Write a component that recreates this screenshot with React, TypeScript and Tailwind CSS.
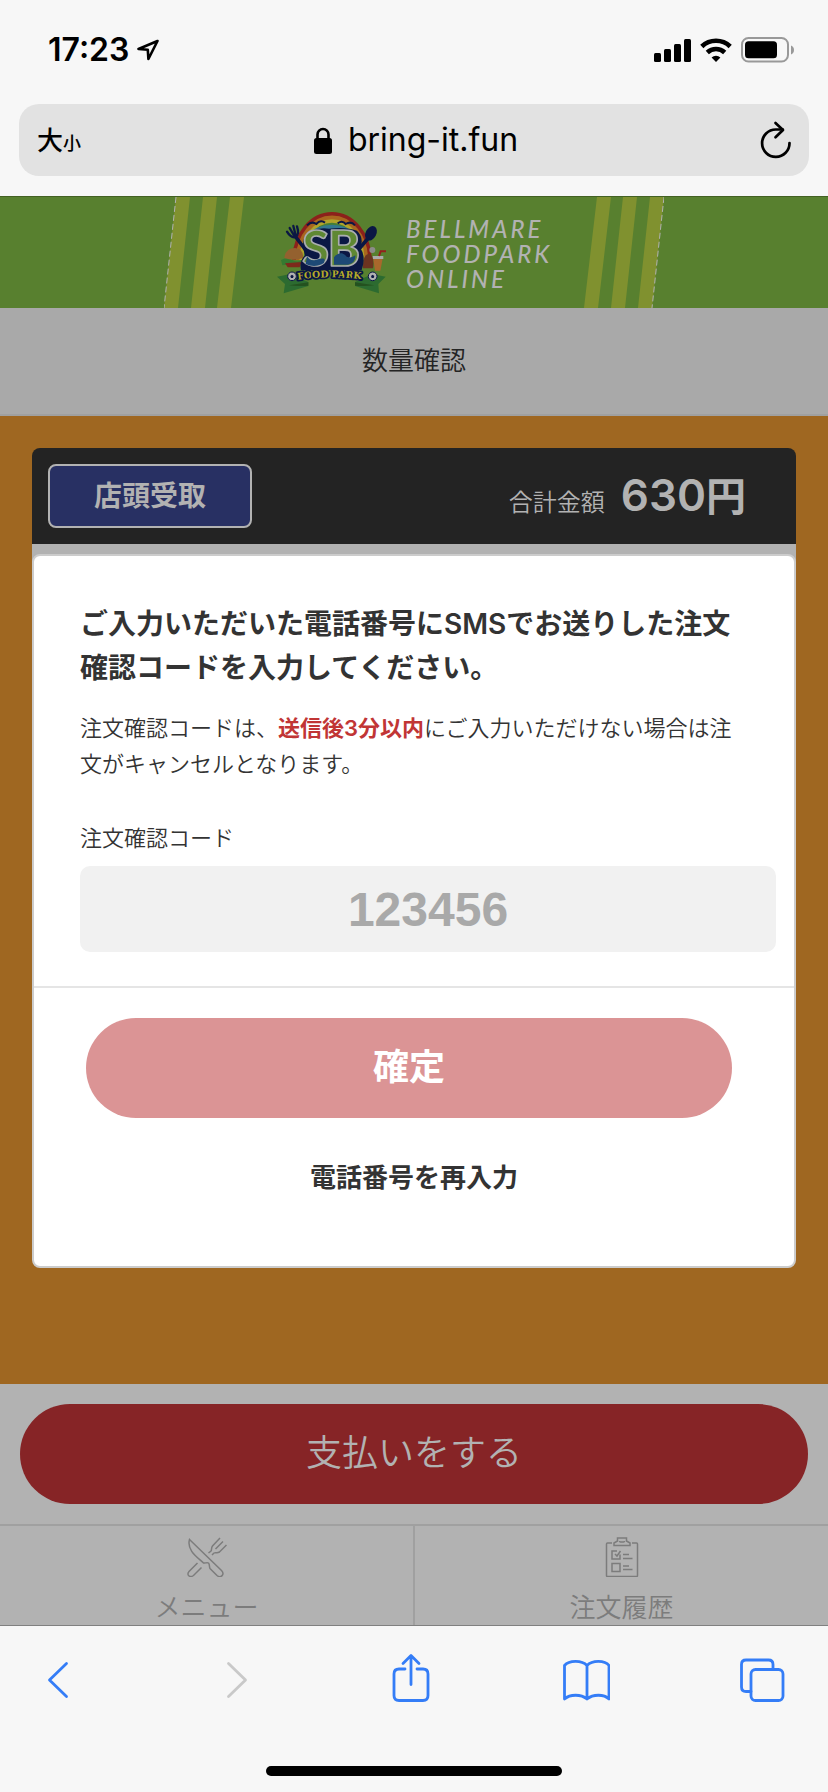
import { useState } from "react"
import type { ReactNode } from "react"

function App() {
  return (
    <div className="flex min-h-screen flex-col bg-[#f7f7f7] font-['Inter','Noto_Sans_CJK_JP',sans-serif] text-[#333]">
      <StatusBar />
      <AddressBar />
      <Banner />
      <h1 className="border-b-2 border-[#a0a0a0] bg-[#a9a9a9] py-8 text-center text-[26px] leading-[42px] font-[350] text-[#242424]">
        数量確認
      </h1>
      <main className="flex-1 bg-[#9f6721] px-8 pt-8 pb-[116px]">
        <OrderHeader />
        <CodeDialog />
      </main>
      <div className="bg-[#b2b2b2] p-5">
        <button className="h-[100px] w-full rounded-full bg-[#862426] pb-0.5 text-4xl font-[350] text-[#b2b2b2]">
          支払いをする
        </button>
      </div>
      <TabBar />
      <BrowserToolbar />
    </div>
  )
}

function StatusBar() {
  return (
    <div className="flex items-center justify-between px-[34px] pt-[33px] pb-[37px] text-black">
      <div className="flex items-center gap-2 pl-3.5">
        <span className="text-[32px] leading-[34px] font-semibold">17:23</span>
        <svg width="24" height="24" viewBox="0 0 24 24" fill="none">
          <path
            d="M20.500 3 1.500 11l9.300.8.6 9.200z"
            stroke="#000"
            strokeWidth="2.6"
            strokeLinejoin="round"
          />
        </svg>
      </div>
      <div className="flex items-center gap-[9px]">
        <svg width="37" height="24" viewBox="0 0 37 24">
          <rect y="15" width="7" height="9" rx="1.5" />
          <rect x="10" y="11" width="7" height="13" rx="1.5" />
          <rect x="20" y="6" width="7" height="18" rx="1.5" />
          <rect x="30" y="1" width="7" height="23" rx="1.5" />
        </svg>
        <svg width="32" height="24" viewBox="0 0 32 24" fill="none">
          <path d="M1.8 8.5a20.5 20.5 0 0 1 28.4 0" stroke="#000" strokeWidth="4.6" />
          <path d="M7.3 14.5a12.6 12.6 0 0 1 17.4 0" stroke="#000" strokeWidth="4.6" />
          <path d="M16 24l-4.4-4.6a6.4 6.4 0 0 1 8.8 0z" fill="#000" />
        </svg>
        <svg width="53" height="26" viewBox="0 0 53 26">
          <rect x="1" y="1" width="46" height="23.5" rx="6.5" fill="none" stroke="#999" strokeWidth="2" />
          <rect x="4" y="4.3" width="32" height="17" rx="3.5" />
          <path d="M50 8.5c4 1.5 4 7.5 0 9z" fill="#999" />
        </svg>
      </div>
    </div>
  )
}

function AddressBar() {
  return (
    <div className="px-[19px] pb-5">
      <div className="flex h-[72px] items-center justify-between rounded-[20px] bg-[#e2e2e2] px-[18px] text-black">
        <button className="w-16 text-left text-[26px] font-medium" aria-label="大小">
          大<span className="text-lg">小</span>
        </button>
        <div className="flex items-center gap-4 text-[32px]">
          <svg width="18" height="27" viewBox="0 0 18 27">
            <rect y="11" width="18" height="16" rx="2.5" />
            <path d="M3.5 12V7.500a5.500 5.500 0 0 1 11 0V12" fill="none" stroke="#000" strokeWidth="2.6" />
          </svg>
          <span>bring-it.fun</span>
        </div>
        <button className="flex w-[60px] justify-end" aria-label="再読み込み">
          <svg width="32" height="38" viewBox="0 0 32 38" fill="none" stroke="#000" strokeWidth="2.7">
            <path d="M30.500 22A13.700 13.700 0 1 1 16.800 8.500h7" strokeLinecap="round" />
            <path d="M16.500 2l7.500 7-7.500 7.300" strokeLinecap="round" strokeLinejoin="round" />
          </svg>
        </button>
      </div>
    </div>
  )
}

function Banner() {
  return (
    <header className="flex h-28 justify-center border-t border-[#436122] bg-[#58802f]">
      <svg width="80" height="111" viewBox="0 0 80 111" fill="#80912f">
        <path d="M12 0h14L14 111H0zM39 0h14L41 111H27zM66 0h14L67 111H53z" />
        <path d="M12 0 0 111" stroke="#b2b2b2" strokeDasharray="6 3" />
      </svg>
      <div className="flex w-[340px] items-center pl-8">
        <FoodParkLogo />
        <p className="pt-0.5 pl-5 font-['Lato',sans-serif] text-2xl leading-[25px] font-medium tracking-[3px] text-[#b2b2b2] italic">
          BELLMARE
          <br />
          FOODPARK
          <br />
          ONLINE
        </p>
      </div>
      <svg width="80" height="111" viewBox="0 0 80 111" fill="#80912f">
        <path d="M13 0h14L14 111H0zM39 0h14L41 111H27zM66 0h14L68 111H54z" />
        <path d="M80 0 68 111" stroke="#b2b2b2" strokeDasharray="6 3" />
      </svg>
    </header>
  )
}

function FoodParkLogo() {
  return (
    <svg width="110" height="85" viewBox="15 20 330 255" className="shrink-0">
      {/* rainbow */}
      <g fill="none" strokeWidth="13">
        <path d="M70 170a113 138 0 0 1 226 0" stroke="#8c211b" strokeWidth="12" />
        <path d="M81 170a102 127 0 0 1 204 0" stroke="#a9661f" />
        <path d="M92 170a91 116 0 0 1 182 0" stroke="#b1a32b" />
        <path d="M104 170a79 105 0 0 1 158 0" stroke="#467f35" />
      </g>
      <ellipse cx="183" cy="90" rx="58" ry="26" fill="#34788f" />
      <g fill="none" stroke="#0b1744" strokeWidth="6">
        <path d="M108 66q14-14 28-4 12-14 26-4" />
        <path d="M200 60q14-10 24 2 16-10 28 4" />
      </g>
      {/* fork and spoon */}
      <g stroke="#0b1744" strokeLinecap="round" fill="none">
        <path d="M72 98 104 140" strokeWidth="11" />
        <path d="M48 85q12 20 26 16 12-8 4-32M56 74l14 24M67 68l7 28" strokeWidth="7" />
        <path d="M292 104 258 144" strokeWidth="11" />
      </g>
      <ellipse cx="300" cy="90" rx="16" ry="23" fill="#0b1744" transform="rotate(28 300 90)" />
      {/* burger */}
      <path d="M30 170q18-10 34 0t36-4l-4 12-62 8z" fill="#357a31" />
      <path d="M40 164q4-30 32-30 26 2 24 30-28 10-56 0z" fill="#94612f" />
      <path d="M42 180l50-4-6 16H50z" fill="#7d2a1b" />
      {/* chicken and drink */}
      <path d="M276 195q-2-40 18-44 18 8 12 44z" fill="#6c3320" />
      <circle cx="304" cy="140" r="9" fill="#8c8c89" />
      <path d="M306 160h30l-8 42h-16z" fill="#a9682c" />
      <path d="M305 158h32v9h-31z" fill="#aaa" />
      <path d="M324 158l5-14h18" fill="none" stroke="#94211c" strokeWidth="6" />
      {/* ribbon */}
      <path d="M18 220l40-8 54 24v12l-74 22 4-28z" fill="#2c6b30" />
      <path d="M344 220l-40-8-52 24v12l72 22-2-28z" fill="#2c6b30" />
      <path d="M54 246q30-4 58-9v10q-30 3-58-1zM310 246q-30-4-58-9v10q30 3 58-1z" fill="#24511f" />
      {/* SB */}
      <path d="M90 200q-6-26 12-44-16-50 12-72 30-12 60-8 50-6 84 6 22 22 10 52 18 26 4 66z" fill="#0b1744" />
      <g
        fontFamily="Lato, sans-serif"
        fontWeight="900"
        fontSize="146"
        fill="#5f8833"
        stroke="#aaadaf"
        strokeWidth="5"
        strokeLinejoin="round"
      >
        <text x="94" y="188">S</text>
        <text x="170" y="188">B</text>
      </g>
      {/* sea inside the lower half of the letters */}
      <path
        d="M104 182l4-24q8 16 26 12 14-6 26-4 4 12-8 17-24 10-48-1zM189 184v-22q10-14 24-12 10 4 14 10 14 6 26-4 2 22-22 28z"
        fill="#1d4976"
      />
      {/* name plate */}
      <path id="plate" d="M80 229Q183 214 296 231" fill="none" />
      <text
        fontFamily="DejaVu Serif, serif"
        fontWeight="700"
        fontSize="28"
        fill="#b5ab28"
        stroke="#0b1744"
        strokeWidth="11"
        strokeLinejoin="round"
        paintOrder="stroke"
      >
        <textPath href="#plate">FOOD PARK</textPath>
      </text>
      <g stroke="#0b1744" strokeWidth="3" fill="#b2b2b2">
        <circle cx="63" cy="219" r="13" />
        <circle cx="305" cy="219" r="13" />
      </g>
      <path d="M63 214l5 4-2 6h-6l-2-6zM305 214l5 4-2 6h-6l-2-6z" fill="#0b1744" />
    </svg>
  )
}

function OrderHeader() {
  return (
    <>
      <div className="flex h-24 items-center justify-between rounded-t-lg bg-[#232323] pr-[50px] pl-4 text-[#b2b2b2]">
        <div className="w-[204px] rounded-lg border-2 border-[#b2b2b2] bg-[#283063] py-3 text-center text-[28px] leading-9 font-bold">
          店頭受取
        </div>
        <p className="flex items-baseline gap-4 leading-[56px]">
          <span className="text-2xl font-[350]">合計金額</span>
          <span className="text-[44px] font-semibold">
            630<span className="text-[40px]">円</span>
          </span>
        </p>
      </div>
      <div className="h-5 bg-[#b2b2b2]" />
    </>
  )
}

function CodeDialog() {
  const [code, setCode] = useState("")

  return (
    <section
      role="dialog"
      aria-labelledby="dialog-title"
      className="-mt-2.5 rounded-lg border-2 border-[#ccc] bg-white"
    >
      <div className="border-b-2 border-[#e5e5e5] px-[46px] pt-[46px] pb-[34px]">
        <h2 id="dialog-title" className="text-[28px] leading-[44px] font-semibold">
          ご入力いただいた電話番号にSMSでお送りした注文確認コードを入力してください。
        </h2>
        <p className="mt-5 text-[22px] leading-9 font-[350]">
          注文確認コードは、
          <strong className="font-semibold text-[#c13535]">送信後3分以内</strong>
          にご入力いただけない場合は注文がキャンセルとなります。
        </p>
        <label htmlFor="code" className="mt-[38px] block text-[22px] leading-9 font-[350]">
          注文確認コード
        </label>
        <input
          id="code"
          inputMode="numeric"
          placeholder="123456"
          value={code}
          onChange={(e) => setCode(e.target.value)}
          className="mt-2.5 block h-[86px] w-[calc(100%+28px)] rounded-[10px] bg-[#f1f1f1] text-center font-['Liberation_Sans',sans-serif] text-5xl font-bold placeholder:text-[#a9a9a9]"
        />
      </div>
      <div className="flex flex-col px-[46px] pt-[30px] pb-[70px]">
        <button className="mr-4 ml-1.5 h-[100px] rounded-full bg-[#db9495] pb-0.5 text-4xl font-bold text-white">
          確定
        </button>
        <button className="mt-[42px] self-center text-[26px] leading-9 font-bold">
          電話番号を再入力
        </button>
      </div>
    </section>
  )
}

function TabBar() {
  return (
    <nav className="flex border-t-2 border-[#a0a0a0] bg-[#b2b2b2]">
      <Tab label="メニュー">
        <path d="M2.500 2.500 34.500 33.500c4 4-1 8-4.500 5L23 31.500c-1-1.500 0-4-1.500-5.500-1.500-1-3.500.5-5 0C10 20-.5 13 2.500 2.500z" />
        <path d="M33 1l-7.500 8c-1.500 2-.5 3.500-1.500 5l-2.500 2M36 4.500l-7.500 7.500M39.500 8l-7 7c-2.500 1.500-4 0-5.500 1l-2 2M10.500 26l-8.500 8.500c-3 3.500 1 6.500 4.500 4l8-8" />
      </Tab>
      <div className="w-0.5 bg-[#a0a0a0]" />
      <Tab label="注文履歴">
        <path d="M10 6H5.500q-1 0-1 1v31.500q0 1 1 1h29q1 0 1-1V7q0-1-1-1H30" />
        <path d="M12 8.500V6l3.500-2V1h9v3L28 6v2.500zM17.500 4q0 1 1 1h3q1 0 1-1" />
        <path d="M15 14h-5v8h8v-4.500M13 17l2 2 3.500-5M10 26.500h8v8h-8zM21 17.500h6M21 21.500h9.500M21 29h6M21 32.500h9.500" />
      </Tab>
    </nav>
  )
}

function Tab({ label, children }: { label: string; children: ReactNode }) {
  return (
    <a
      href="#"
      className="flex flex-1 flex-col items-center gap-[18px] pt-[11px] pb-1 text-[26px] leading-[26px] font-[350] text-[#7c7c7c]"
    >
      <svg width="40" height="40" viewBox="0 0 40 40" fill="none" stroke="#7c7c7c" strokeWidth="1.5">
        {children}
      </svg>
      {label}
    </a>
  )
}

function BrowserToolbar() {
  return (
    <footer className="border-t border-[#808080]">
      <div className="flex justify-between pt-[27px] pr-[42px] pl-[34px] text-[#347df7]">
        <ToolbarButton label="戻る">
          <path d="M32.500 10.500 15.500 27l17 16.500" />
        </ToolbarButton>
        <ToolbarButton label="進む" disabled>
          <path d="M18.500 10.500 35.500 27l-17 16.500" />
        </ToolbarButton>
        <ToolbarButton label="共有">
          <path d="M19 16h-6q-5 0-5 5v21.500q0 5 5 5h24q5 0 5-5V21q0-5-5-5h-6M25 31.500V3.500M17 10.500l8-8 8 8" />
        </ToolbarButton>
        <ToolbarButton label="ブックマーク">
          <path d="M25 12.500C20 7 7 7 2.500 12.500v33.500C8 41 19 41 25 46c6-5 17-5 22-0V12.500C43 7 30 7 25 12.500zV46" />
        </ToolbarButton>
        <ToolbarButton label="タブ">
          <path d="M13 38.500H8q-4.500 0-4.500-4.500V11.500Q3.500 7 8 7h22.500Q35 7 35 11.500v5" />
          <rect x="13" y="16.500" width="32" height="31" rx="4.500" />
        </ToolbarButton>
      </div>
      <div className="mx-auto mt-[61px] mb-4 h-2.5 w-[296px] rounded-full bg-black" />
    </footer>
  )
}

type ToolbarButtonProps = {
  label: string
  disabled?: boolean
  children: ReactNode
}

function ToolbarButton({ label, disabled, children }: ToolbarButtonProps) {
  return (
    <button aria-label={label} disabled={disabled} className="disabled:text-[#c9c9c9]">
      <svg
        width="48"
        height="52"
        viewBox="0 0 48 52"
        fill="none"
        stroke="currentColor"
        strokeWidth="2.8"
        strokeLinecap="round"
        strokeLinejoin="round"
      >
        {children}
      </svg>
    </button>
  )
}

export default App
